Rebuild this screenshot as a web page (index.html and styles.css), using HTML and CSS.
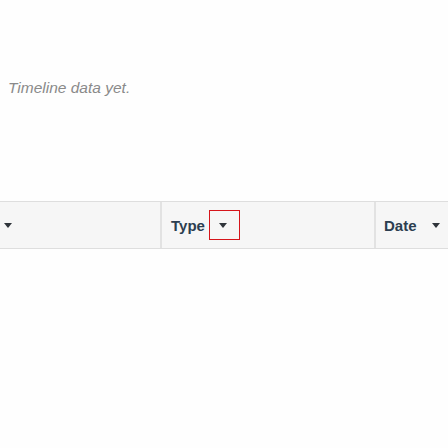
FILE: index.html
```html
<!DOCTYPE html>
<html>
<head>
<meta charset="utf-8">
<link rel="stylesheet" href="styles.css">
</head>
<body>
<div class="page">
  <p class="empty">Timeline data yet.</p>
  <div class="thead">
    <div class="th th-first">
      <span class="caret"></span>
    </div>
    <div class="th th-type">
      <span class="label">Type</span>
      <span class="focus-box"><span class="caret"></span></span>
    </div>
    <div class="th th-date">
      <span class="label">Date</span>
      <span class="caret"></span>
    </div>
  </div>
</div>
</body>
</html>
```
FILE: styles.css
```css
html, body {
  margin: 0;
  padding: 0;
  background: #fefefe;
}
body {
  font-family: "Liberation Sans", Arial, sans-serif;
  width: 448px;
  height: 448px;
  overflow: hidden;
}
.page {
  padding-top: 76px;
}
.empty {
  margin: 0 0 0 8px;
  font-size: 15.5px;
  line-height: 24px;
  font-style: italic;
  color: #8a8a8a;
}
.thead {
  margin-top: 101px;
  display: grid;
  grid-template-columns: 160px 214px 74px;
  height: 46px;
  background: #f6f6f6;
  border-top: 1px solid #dedede;
  border-bottom: 1px solid #dedede;
}
.th {
  display: flex;
  align-items: center;
  border-left: 2px solid #e2e2e2;
}
.th-first {
  border-left: none;
  padding-left: 4px;
}
.th-type {
  padding-left: 9px;
}
.th-date {
  padding-left: 8px;
  justify-content: space-between;
  padding-right: 8px;
}
.label {
  font-weight: bold;
  font-size: 15px;
  color: #2c3e50;
}
.caret {
  display: inline-block;
  width: 0;
  height: 0;
  border-left: 4px solid transparent;
  border-right: 4px solid transparent;
  border-top: 5px solid #2f343a;
}
.focus-box {
  margin-left: 4px;
  width: 29px;
  height: 28px;
  border: 1px solid #d6151b;
  display: flex;
  align-items: center;
  justify-content: center;
  box-sizing: content-box;
}
.focus-box .caret {
  margin-left: -3px;
}
```
